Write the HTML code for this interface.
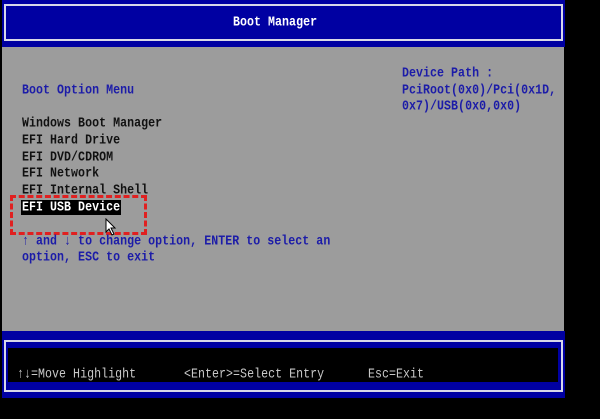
<!DOCTYPE html>
<html><head><style>
body{margin:0;width:600px;height:419px;background:#000;position:relative;overflow:hidden;font-family:"Liberation Mono",monospace;}
.a{position:absolute}
.t{position:absolute;font-size:11.6px;font-weight:bold;line-height:14px;white-space:pre;transform:scaleY(1.2);transform-origin:left center;letter-spacing:0.05px}
.b{color:#1c1ca8}.k{color:#111}
</style></head><body>
<div class="a" style="left:2px;top:0;width:563px;height:47px;background:#0000a2"></div>
<div class="a" style="left:4px;top:4px;width:555px;height:33px;border:2px solid #d8d8e8"></div>
<div class="t" style="left:233px;top:16px;color:#fff">Boot Manager</div>
<div class="a" style="left:2px;top:47px;width:562px;height:284px;background:#9c9c9c"></div>
<div class="t b" style="left:22px;top:84px">Boot Option Menu</div>
<div class="t b" style="left:402px;top:67px">Device Path :</div>
<div class="t b" style="left:402px;top:84px">PciRoot(0x0)/Pci(0x1D,</div>
<div class="t b" style="left:402px;top:100px">0x7)/USB(0x0,0x0)</div>
<div class="t k" style="left:22px;top:117px">Windows Boot Manager</div>
<div class="t k" style="left:22px;top:134px">EFI Hard Drive</div>
<div class="t k" style="left:22px;top:151px">EFI DVD/CDROM</div>
<div class="t k" style="left:22px;top:167px">EFI Network</div>
<div class="t k" style="left:22px;top:184px">EFI Internal Shell</div>
<div class="a" style="left:21px;top:200px;width:100px;height:15px;background:#000"></div>
<div class="t" style="left:22px;top:201px;color:#fff">EFI USB Device</div>
<div class="a" style="left:10px;top:195px;width:131px;height:34px;border:3px dashed #e02020"></div>
<svg class="a" style="left:105px;top:218px" width="14" height="18" viewBox="0 0 14 18"><path d="M1 1 L1 14 L4 11 L7 17 L9 16 L6 10 L10 10 Z" fill="#fff" stroke="#000" stroke-width="1"/></svg>
<div class="t b" style="left:22px;top:235px">↑ and ↓ to change option, ENTER to select an</div>
<div class="t b" style="left:22px;top:251px">option, ESC to exit</div>
<div class="a" style="left:2px;top:331px;width:563px;height:67px;background:#0000a2"></div>
<div class="a" style="left:4px;top:340px;width:555px;height:48px;border:2px solid #d8d8e8"></div>
<div class="a" style="left:8px;top:348px;width:550px;height:34px;background:#000"></div>
<div class="t" style="left:17px;top:368px;color:#c8c8c8;font-weight:normal">↑↓=Move Highlight</div>
<div class="t" style="left:184px;top:368px;color:#c8c8c8;font-weight:normal">&lt;Enter&gt;=Select Entry</div>
<div class="t" style="left:368px;top:368px;color:#c8c8c8;font-weight:normal">Esc=Exit</div>
</body></html>
